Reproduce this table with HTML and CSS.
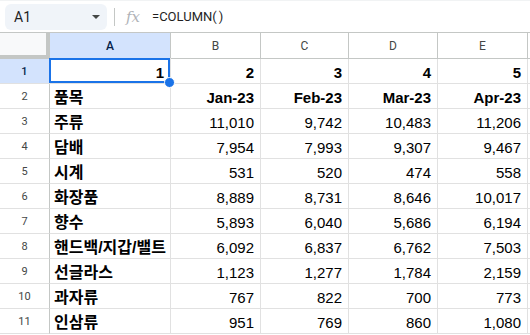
FILE: index.html
```html
<!DOCTYPE html>
<html>
<head>
    <title>Sheet</title>
    <link rel="stylesheet" href="styles.css">
</head>
<body>
    <div class="toolbar">
        <div class="name-box">
            <span class="cell-ref">A1</span>
            <span class="caret"></span>
        </div>
        <div class="divider"></div>
        <span class="fx"><i>f</i>x</span>
        <span class="formula">=COLUMN<span class="parens">()</span></span>
    </div>
    <div class="grid">
        <div class="corner"></div>
        <div class="col-head active">A</div>
        <div class="col-head">B</div>
        <div class="col-head">C</div>
        <div class="col-head">D</div>
        <div class="col-head">E</div>
        <div class="col-head rest"></div>

        <div class="row-head active">1</div>
        <div class="cell num bold selected">1</div>
        <div class="cell num bold">2</div>
        <div class="cell num bold">3</div>
        <div class="cell num bold">4</div>
        <div class="cell num bold">5</div>
        <div class="cell"></div>

        <div class="row-head">2</div>
        <div class="cell bold ko">품목</div>
        <div class="cell num bold">Jan-23</div>
        <div class="cell num bold">Feb-23</div>
        <div class="cell num bold">Mar-23</div>
        <div class="cell num bold">Apr-23</div>
        <div class="cell"></div>

        <div class="row-head">3</div>
        <div class="cell bold ko">주류</div>
        <div class="cell num">11,010</div>
        <div class="cell num">9,742</div>
        <div class="cell num">10,483</div>
        <div class="cell num">11,206</div>
        <div class="cell"></div>

        <div class="row-head">4</div>
        <div class="cell bold ko">담배</div>
        <div class="cell num">7,954</div>
        <div class="cell num">7,993</div>
        <div class="cell num">9,307</div>
        <div class="cell num">9,467</div>
        <div class="cell"></div>

        <div class="row-head">5</div>
        <div class="cell bold ko">시계</div>
        <div class="cell num">531</div>
        <div class="cell num">520</div>
        <div class="cell num">474</div>
        <div class="cell num">558</div>
        <div class="cell"></div>

        <div class="row-head">6</div>
        <div class="cell bold ko">화장품</div>
        <div class="cell num">8,889</div>
        <div class="cell num">8,731</div>
        <div class="cell num">8,646</div>
        <div class="cell num">10,017</div>
        <div class="cell"></div>

        <div class="row-head">7</div>
        <div class="cell bold ko">향수</div>
        <div class="cell num">5,893</div>
        <div class="cell num">6,040</div>
        <div class="cell num">5,686</div>
        <div class="cell num">6,194</div>
        <div class="cell"></div>

        <div class="row-head">8</div>
        <div class="cell bold ko">핸드백/지갑/밸트</div>
        <div class="cell num">6,092</div>
        <div class="cell num">6,837</div>
        <div class="cell num">6,762</div>
        <div class="cell num">7,503</div>
        <div class="cell"></div>

        <div class="row-head">9</div>
        <div class="cell bold ko">선글라스</div>
        <div class="cell num">1,123</div>
        <div class="cell num">1,277</div>
        <div class="cell num">1,784</div>
        <div class="cell num">2,159</div>
        <div class="cell"></div>

        <div class="row-head">10</div>
        <div class="cell bold ko">과자류</div>
        <div class="cell num">767</div>
        <div class="cell num">822</div>
        <div class="cell num">700</div>
        <div class="cell num">773</div>
        <div class="cell"></div>

        <div class="row-head">11</div>
        <div class="cell bold ko">인삼류</div>
        <div class="cell num">951</div>
        <div class="cell num">769</div>
        <div class="cell num">860</div>
        <div class="cell num">1,080</div>
        <div class="cell"></div>
    </div>
</body>
</html>
```
FILE: styles.css
```css
body {
    margin: 0;
    background-color: white;
    font-family: Roboto, "Liberation Sans", Arial, sans-serif;
    color: #1f1f1f;
    overflow: hidden;
}
.toolbar {
    height: 32px;
    display: flex;
    align-items: center;
    border-top: 1px solid #f1f3f4;
    box-sizing: border-box;
}
.name-box {
    margin-left: 5px;
    width: 102px;
    height: 26px;
    background-color: #f0f4f9;
    border-radius: 6px;
    display: flex;
    align-items: center;
    justify-content: space-between;
    padding: 0 7px 0 9px;
    box-sizing: border-box;
}
.cell-ref {
    font-size: 14px;
    color: #1f1f1f;
}
.caret {
    width: 0;
    height: 0;
    border-left: 4px solid transparent;
    border-right: 4px solid transparent;
    border-top: 4px solid #444746;
}
.divider {
    width: 1px;
    height: 18px;
    background-color: #c4c7c5;
    margin: 0 11px 0 7px;
}
.fx {
    font-family: "DejaVu Serif", "Liberation Serif", serif;
    font-style: italic;
    font-size: 15px;
    color: #b0b3b8;
    width: 18px;
    margin-right: 8px;
}
.fx i {
    font-style: italic;
}
.formula {
    font-size: 13px;
    color: #1f1f1f;
}
.parens {
    letter-spacing: 2px;
}
.grid {
    display: grid;
    grid-template-columns: 50px 121px 90px 88px 89px 90px 1fr;
    grid-template-rows: 26px repeat(11, 25px);
    border-top: 1px solid #c4c7c5;
}
.corner {
    background-color: #f8f9fa;
    border-right: 4px solid #c4c7c5;
    border-bottom: 4px solid #c4c7c5;
}
.col-head {
    border-right: 1px solid #c4c7c5;
    border-bottom: 1px solid #c4c7c5;
    display: flex;
    align-items: center;
    justify-content: center;
    font-size: 12px;
    color: #444746;
}
.row-head {
    border-right: 1px solid #c4c7c5;
    border-bottom: 1px solid #e1e1e1;
    display: flex;
    align-items: center;
    justify-content: center;
    font-size: 11px;
    color: #444746;
}
.col-head.active,
.row-head.active {
    background-color: #d3e3fd;
    color: #041e49;
    font-weight: 500;
}
.cell {
    border-right: 1px solid #e1e1e1;
    border-bottom: 1px solid #e1e1e1;
    display: flex;
    align-items: flex-end;
    padding: 0 4px 2px 4px;
    font-family: "Liberation Sans", Arial, "Noto Sans CJK KR", sans-serif;
    font-size: 15px;
    line-height: 17px;
    color: #000;
    white-space: nowrap;
    overflow: hidden;
    min-width: 0;
}
.ko {
    font-size: 16px;
    line-height: 19px;
    padding-bottom: 1px;
}
.num {
    justify-content: flex-end;
    padding-right: 6px;
}
.bold {
    font-weight: bold;
}
.selected {
    position: relative;
    overflow: visible;
    box-shadow: inset 0 0 0 2px #1a73e8;
    margin: -1px 0 0 -1px;
}
.selected::after {
    content: "";
    position: absolute;
    right: -5px;
    bottom: -5px;
    width: 9px;
    height: 9px;
    border-radius: 50%;
    background-color: #1a73e8;
    border: 1px solid white;
    z-index: 2;
}
```
